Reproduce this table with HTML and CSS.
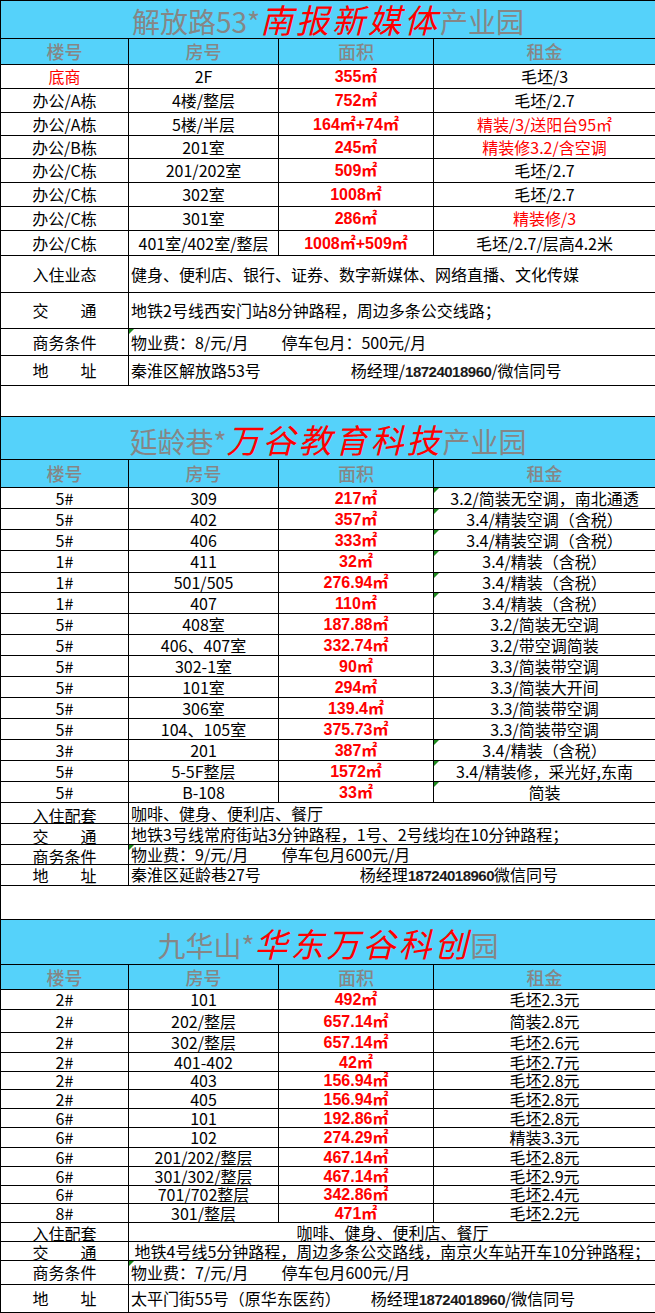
FILE: index.html
```html
<!DOCTYPE html>
<html lang="zh">
<head>
<meta charset="utf-8">
<title>产业园招租</title>
<link rel="stylesheet" href="styles.css">
</head>
<body>
<table class="sheet">
<colgroup><col class="c1"><col class="c2"><col class="c3"><col class="c4"></colgroup>
<tbody>
<!-- Section 1 -->
<tr class="r38 title"><td colspan="4"><div class="ttl h37"><span class="tg">解放路53*</span><span class="tr">南报新媒体</span><span class="tg">产业园</span></div></td></tr>
<tr class="r26 head"><td>楼号</td><td>房号</td><td>面积</td><td>租金</td></tr>
<tr class="r24"><td class="red">底商</td><td>2F</td><td class="area">355㎡</td><td>毛坯/3</td></tr>
<tr class="r24"><td>办公/A栋</td><td>4楼/整层</td><td class="area">752㎡</td><td>毛坯/2.7</td></tr>
<tr class="r23"><td>办公/A栋</td><td>5楼/半层</td><td class="area">164㎡+74㎡</td><td class="red">精装/3/送阳台95㎡</td></tr>
<tr class="r23"><td>办公/B栋</td><td>201室</td><td class="area">245㎡</td><td class="red">精装修3.2/含空调</td></tr>
<tr class="r24"><td>办公/C栋</td><td>201/202室</td><td class="area">509㎡</td><td>毛坯/2.7</td></tr>
<tr class="r24"><td>办公/C栋</td><td>302室</td><td class="area">1008㎡</td><td>毛坯/2.7</td></tr>
<tr class="r24"><td>办公/C栋</td><td>301室</td><td class="area">286㎡</td><td class="red">精装修/3</td></tr>
<tr class="r25"><td>办公/C栋</td><td>401室/402室/整层</td><td class="area">1008㎡+509㎡</td><td>毛坯/2.7/层高4.2米</td></tr>
<tr class="r37"><td class="label">入住业态</td><td colspan="3" class="info">健身、便利店、银行、证券、数字新媒体、网络直播、文化传媒</td></tr>
<tr class="r36"><td class="label">交　　通</td><td colspan="3" class="info">地铁2号线西安门站8分钟路程，周边多条公交线路；</td></tr>
<tr class="r27"><td class="label">商务条件</td><td colspan="3" class="info tri">物业费：8/元/月<span class="gap33">停车包月：500元/月</span></td></tr>
<tr class="r30"><td class="label">地　　址</td><td colspan="3" class="info">秦淮区解放路53号<span class="gap90">杨经理/<b class="phone">18724018960</b>/微信同号</span></td></tr>
<tr class="r31"><td colspan="4"></td></tr>
<!-- Section 2 -->
<tr class="r43 title"><td colspan="4"><div class="ttl h42"><span class="tg">延龄巷*</span><span class="tr">万谷教育科技</span><span class="tg">产业园</span></div></td></tr>
<tr class="r28 head"><td>楼号</td><td>房号</td><td>面积</td><td>租金</td></tr>
<tr class="r21"><td>5#</td><td>309</td><td class="area">217㎡</td><td class="tri">3.2/简装无空调，南北通透</td></tr>
<tr class="r21"><td>5#</td><td>402</td><td class="area">357㎡</td><td class="tri">3.4/精装空调（含税）</td></tr>
<tr class="r21"><td>5#</td><td>406</td><td class="area">333㎡</td><td class="tri">3.4/精装空调（含税）</td></tr>
<tr class="r22"><td>1#</td><td>411</td><td class="area">32㎡</td><td class="tri">3.4/精装（含税）</td></tr>
<tr class="r20"><td>1#</td><td>501/505</td><td class="area">276.94㎡</td><td class="tri">3.4/精装（含税）</td></tr>
<tr class="r21"><td>1#</td><td>407</td><td class="area">110㎡</td><td class="tri">3.4/精装（含税）</td></tr>
<tr class="r21"><td>5#</td><td>408室</td><td class="area">187.88㎡</td><td>3.2/简装无空调</td></tr>
<tr class="r21"><td>5#</td><td>406、407室</td><td class="area">332.74㎡</td><td>3.2/带空调简装</td></tr>
<tr class="r21"><td>5#</td><td>302-1室</td><td class="area">90㎡</td><td>3.3/简装带空调</td></tr>
<tr class="r21"><td>5#</td><td>101室</td><td class="area">294㎡</td><td>3.3/简装大开间</td></tr>
<tr class="r21"><td>5#</td><td>306室</td><td class="area">139.4㎡</td><td>3.3/简装带空调</td></tr>
<tr class="r21"><td>5#</td><td>104、105室</td><td class="area">375.73㎡</td><td>3.3/简装带空调</td></tr>
<tr class="r21"><td>3#</td><td>201</td><td class="area">387㎡</td><td class="tri">3.4/精装（含税）</td></tr>
<tr class="r21"><td>5#</td><td>5-5F整层</td><td class="area">1572㎡</td><td class="tri">3.4/精装修，采光好,东南</td></tr>
<tr class="r21"><td>5#</td><td>B-108</td><td class="area">33㎡</td><td class="tri">简装</td></tr>
<tr class="r21"><td class="label low">入住配套</td><td colspan="3" class="info">咖啡、健身、便利店、餐厅</td></tr>
<tr class="r21"><td class="label low">交　　通</td><td colspan="3" class="info">地铁3号线常府街站3分钟路程，1号、2号线均在10分钟路程；</td></tr>
<tr class="r20"><td class="label low">商务条件</td><td colspan="3" class="info tri">物业费：9/元/月<span class="gap33">停车包月600元/月</span></td></tr>
<tr class="r21"><td class="label">地　　址</td><td colspan="3" class="info">秦淮区延龄巷27号<span class="gap99">杨经理<b class="phone">18724018960</b>微信同号</span></td></tr>
<tr class="r34"><td colspan="4"></td></tr>
<!-- Section 3 -->
<tr class="r45 title"><td colspan="4"><div class="ttl h44 pb3"><span class="tg">九华山*</span><span class="tr">华东万谷科创</span><span class="tg">园</span></div></td></tr>
<tr class="r25 head"><td>楼号</td><td>房号</td><td>面积</td><td>租金</td></tr>
<tr class="r20"><td>2#</td><td>101</td><td class="area">492㎡</td><td>毛坯2.3元</td></tr>
<tr class="r23"><td>2#</td><td>202/整层</td><td class="area">657.14㎡</td><td>简装2.8元</td></tr>
<tr class="r20"><td>2#</td><td>302/整层</td><td class="area">657.14㎡</td><td>毛坯2.6元</td></tr>
<tr class="r19"><td>2#</td><td>401-402</td><td class="area">42㎡</td><td>毛坯2.7元</td></tr>
<tr class="r18"><td>2#</td><td>403</td><td class="area">156.94㎡</td><td>毛坯2.8元</td></tr>
<tr class="r19"><td>2#</td><td>405</td><td class="area">156.94㎡</td><td>毛坯2.8元</td></tr>
<tr class="r19"><td>6#</td><td>101</td><td class="area">192.86㎡</td><td>毛坯2.8元</td></tr>
<tr class="r20"><td>6#</td><td>102</td><td class="area">274.29㎡</td><td>精装3.3元</td></tr>
<tr class="r19"><td>6#</td><td>201/202/整层</td><td class="area">467.14㎡</td><td>毛坯2.8元</td></tr>
<tr class="r19"><td>6#</td><td>301/302/整层</td><td class="area">467.14㎡</td><td>毛坯2.9元</td></tr>
<tr class="r18"><td>6#</td><td>701/702整层</td><td class="area">342.86㎡</td><td>毛坯2.4元</td></tr>
<tr class="r19"><td>8#</td><td>301/整层</td><td class="area">471㎡</td><td>毛坯2.2元</td></tr>
<tr class="r19"><td class="label low">入住配套</td><td colspan="3" class="info centered">咖啡、健身、便利店、餐厅</td></tr>
<tr class="r19"><td class="label low">交　　通</td><td colspan="3" class="info">&nbsp;地铁4号线5分钟路程，周边多条公交路线，南京火车站开车10分钟路程；</td></tr>
<tr class="r24"><td class="label">商务条件</td><td colspan="3" class="info tri">物业费：7/元/月<span class="gap33">停车包月600元/月</span></td></tr>
<tr class="r28"><td class="label">地　　址</td><td colspan="3" class="info">太平门街55号（原华东医药）<span class="gap30">杨经理<b class="phone">18724018960</b>/微信同号</span></td></tr>
</tbody>
</table>
</body>
</html>
```

FILE: styles.css
```css
html, body {
  margin: 0;
  padding: 0;
  background: #ffffff;
}

body {
  width: 655px;
  font-family: "Noto Sans CJK SC", "Liberation Sans", sans-serif;
  color: #000000;
}

.sheet {
  border-collapse: collapse;
  table-layout: fixed;
  width: 655px;
}

.c1 { width: 128px; }
.c2 { width: 150px; }
.c3 { width: 155px; }
.c4 { width: 222px; }

.sheet td {
  border: 1px solid #000000;
  padding: 0 1px;
  font-size: 16px;
  line-height: 15px;
  text-align: center;
  vertical-align: middle;
  white-space: nowrap;
  overflow: visible;
}

.r18 { height: 18px; }
.r19 { height: 19px; }
.r20 { height: 20px; }
.r21 { height: 21px; }
.r22 { height: 22px; }
.r23 { height: 23px; }
.r24 { height: 24px; }
.r25 { height: 25px; }
.r26 { height: 26px; }
.r27 { height: 27px; }
.r28 { height: 28px; }
.r30 { height: 30px; }
.r31 { height: 31px; }
.r34 { height: 34px; }
.r36 { height: 36px; }
.r37 { height: 37px; }
.r38 { height: 38px; }
.r43 { height: 43px; }
.r45 { height: 45px; }

.sheet .title td {
  background: #55d2fa;
  padding: 0;
  vertical-align: bottom;
}

.ttl {
  display: flex;
  flex-wrap: wrap;
  justify-content: center;
  align-items: baseline;
  align-content: flex-end;
  box-sizing: border-box;
  padding-bottom: 2px;
}

.h37 { height: 37px; }
.h42 { height: 42px; padding-bottom: 3px; }
.h44 { height: 44px; }
.pb3 { padding-bottom: 4px; }

.tg {
  font-size: 28px;
  line-height: 1;
  color: #868686;
}

.tr {
  font-size: 33px;
  line-height: 1;
  letter-spacing: 3px;
  color: #ff0000;
  font-style: italic;
}

.sheet .head td {
  background: #55d2fa;
  color: #868686;
  font-size: 18px;
  font-weight: 500;
}

.red {
  color: #ff0000;
}

.sheet td.area {
  color: #ff0000;
  font-family: "Liberation Sans", "Noto Sans CJK SC", sans-serif;
  font-weight: bold;
  font-size: 16px;
}

.sheet td.low {
  vertical-align: bottom;
}

.sheet td.info {
  text-align: left;
  padding-left: 2px;
}

.sheet td.info.centered {
  text-align: center;
}

.gap33 { margin-left: 33px; }
.gap90 { margin-left: 90px; }
.gap99 { margin-left: 99px; }
.gap30 { margin-left: 30px; }

.phone {
  font-family: "Liberation Sans", sans-serif;
  font-weight: bold;
  font-size: 15px;
  color: #1a1a1a;
  letter-spacing: -0.5px;
}

.tri {
  position: relative;
}

.tri::before {
  content: "";
  position: absolute;
  left: 0;
  top: 0;
  width: 0;
  height: 0;
  border-top: 5px solid #1e8a1e;
  border-right: 5px solid transparent;
}
```
